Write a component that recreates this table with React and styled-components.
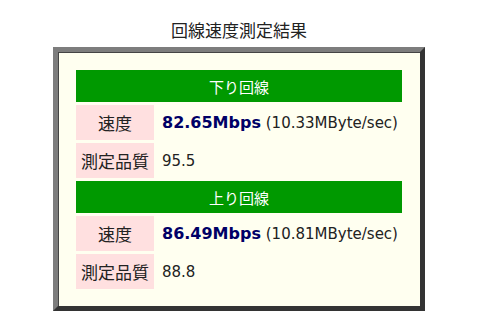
import React from 'react'
import styled, { createGlobalStyle } from 'styled-components'

const GlobalStyle = createGlobalStyle`
    body {
        margin: 0;
        background: #ffffff;
        font-family: "DejaVu Sans", "Noto Sans CJK JP", sans-serif;
        color: #222;
    }
`;

const Page = styled.div`
    width: 478px;
    display: flex;
    flex-direction: column;
    align-items: center;
`;

const Title = styled.h1`
    margin: 0;
    padding-top: 19px;
    height: 28px;
    font-size: 17px;
    font-weight: normal;
    line-height: 22px;
    font-family: "Noto Sans CJK JP", sans-serif;
    color: #222;
`;

const Box = styled.div`
    width: 362px;
    box-sizing: content-box;
    padding: 15px 0 14px;
    background: #fffff0;
    border: 5px solid;
    border-color: #7d7d7d #333333 #333333 #7d7d7d;
    box-shadow: inset 1px 1px 0 #444;
    display: flex;
    justify-content: center;
`;

const Table = styled.table`
    width: 332px;
    border-collapse: separate;
    border-spacing: 3px;
`;

const Head = styled.th`
    height: 32px;
    padding: 0;
    background: #009900;
    color: #ffffff;
    font-family: "Noto Sans CJK JP", sans-serif;
    font-size: 15px;
    font-weight: normal;
    text-align: center;
`;

const Label = styled.td`
    width: 78px;
    height: 35px;
    padding: 0;
    background: #ffe0e0;
    font-family: "Noto Sans CJK JP", sans-serif;
    font-size: 17px;
    text-align: center;
    color: #222;
`;

const Value = styled.td`
    padding: 0 0 0 5px;
    font-size: 15px;
    color: #222;
    white-space: nowrap;
`;

const Speed = styled.b`
    color: #000066;
    font-size: 16px;
`;

const lines = [
    { name: '下り回線', mbps: '82.65', mbyte: '10.33', quality: '95.5' },
    { name: '上り回線', mbps: '86.49', mbyte: '10.81', quality: '88.8' },
];

export default function App() {
    return (
        <Page>
            <GlobalStyle />
            <Title>回線速度測定結果</Title>
            <Box>
                <Table>
                    <tbody>
                        {lines.map(l => (
                            <React.Fragment key={l.name}>
                                <tr>
                                    <Head colSpan={2}>{l.name}</Head>
                                </tr>
                                <tr>
                                    <Label>速度</Label>
                                    <Value>
                                        <Speed>{l.mbps}Mbps</Speed> ({l.mbyte}MByte/sec)
                                    </Value>
                                </tr>
                                <tr>
                                    <Label>測定品質</Label>
                                    <Value>{l.quality}</Value>
                                </tr>
                            </React.Fragment>
                        ))}
                    </tbody>
                </Table>
            </Box>
        </Page>
    )
}
